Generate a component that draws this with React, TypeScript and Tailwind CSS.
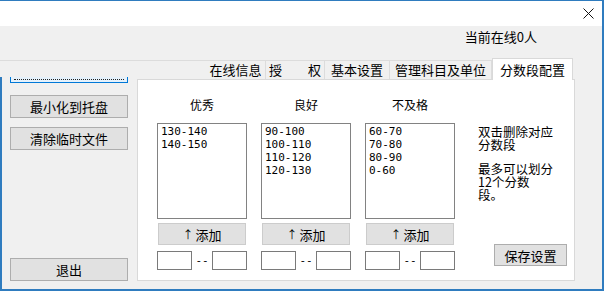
import React from 'react';

const columns = [
  { title: '优秀', items: ['130-140', '140-150'] },
  { title: '良好', items: ['90-100', '100-110', '110-120', '120-130'] },
  { title: '不及格', items: ['60-70', '70-80', '80-90', '0-60'] },
];

const tabs = [
  { label: '在线信息', w: 'w-[60px]' },
  { label: '授　　权', w: 'w-[59px]' },
  { label: '基本设置', w: 'w-[65px]' },
  { label: '管理科目及单位', w: 'w-[102px]' },
];

function Btn({ children, className }: { children: React.ReactNode; className?: string }) {
  return (
    <button
      className={cn(
        'flex items-center justify-center bg-[#e1e1e1] border border-[#adadad] text-[13px] leading-none text-black',
        className
      )}
    >
      {children}
    </button>
  );
}

export default function App() {
  return (
    <div className="w-[605px] h-[291px] bg-white font-['Noto_Sans_CJK_SC',sans-serif] text-black">
      <div className="w-[604px] h-[291px] flex flex-col border-t border-r-2 border-b-2 border-[#2f7cbf] bg-[#f0f0f0]">
        {/* title bar */}
        <div className="h-[25px] bg-white flex items-center justify-end pr-[8px]">
          <svg width="11" height="11" viewBox="0 0 11 11">
            <path d="M0.5 0.5 L10.5 10.5 M10.5 0.5 L0.5 10.5" stroke="#111" strokeWidth="1" />
          </svg>
        </div>

        {/* status */}
        <div className="h-[34px] flex justify-end items-start pt-[3px] pr-[65px]">
          <span className="text-[13px] leading-[16px]">当前在线0人</span>
        </div>

        <div className="flex-1 flex">
          {/* left column */}
          <div className="w-[137px] flex flex-col border-t border-[#dcdcdc]">
            <div className="h-[16px]" />
            <div className="flex-1 flex flex-col border-l-2 border-[#2f7cbf] pl-[8px]">
              <div className="w-[118px] h-[6px] border-x border-b border-[#0078d7] bg-[#e5f1fb] px-[3px]">
                <div className="h-[3px] border-b border-dotted border-[#222]" />
              </div>
              <Btn className="w-[118px] h-[23px] mt-[12px]">最小化到托盘</Btn>
              <Btn className="w-[118px] h-[23px] mt-[9px]">清除临时文件</Btn>
              <Btn className="w-[118px] h-[23px] mt-auto mb-[8px]">退出</Btn>
            </div>
          </div>

          {/* tab control */}
          <div className="flex-1 flex flex-col">
            <div className="h-[19px] flex items-end">
              <div className="w-[69px] h-[19px] border-t border-[#dcdcdc]" />
              {tabs.map((t) => (
                <div
                  key={t.label}
                  className={cn(
                    t.w,
                    'h-[19px] border-t border-r border-[#dcdcdc] flex items-center justify-center text-[13px] whitespace-pre'
                  )}
                >
                  {t.label}
                </div>
              ))}
              <div className="relative top-[1px] w-[81px] h-[22px] bg-white border-x border-t border-[#d9d9d9] flex items-center justify-center text-[13px]">
                分数段配置
              </div>
            </div>

            <div className="w-[438px] h-[202px] bg-white border border-[#d9d9d9] flex pl-[19px] pt-[17px]">
              <div className="flex gap-[14px]">
                {columns.map((c) => (
                  <div key={c.title} className="w-[90px] flex flex-col items-center">
                    <div className="h-[16px] leading-[16px] text-[12px]">{c.title}</div>
                    <div className="mt-[10px] w-[90px] h-[96px] border border-[#828282] bg-white pl-[3px] pt-[1px] font-['DejaVu_Sans_Mono',monospace] text-[11px] leading-[13px]">
                      {c.items.map((it) => (
                        <div key={it}>{it}</div>
                      ))}
                    </div>
                    <button className="mt-[4px] w-[88px] h-[22px] bg-[#e1e1e1] border border-[#cccccc] flex items-center justify-center text-[13px] leading-none">
                      <span className="text-[11px] mr-[2px]">↑</span>添加
                    </button>
                    <div className="mt-[6px] w-full h-[19px] flex items-center justify-between">
                      <div className="w-[35px] h-[19px] border border-[#7a7a7a] bg-white" />
                      <span className="font-['DejaVu_Sans_Mono',monospace] text-[11px] leading-none">--</span>
                      <div className="w-[35px] h-[19px] border border-[#7a7a7a] bg-white" />
                    </div>
                  </div>
                ))}
              </div>

              <div className="ml-[23px] flex-1 flex flex-col">
                <div className="mt-[28px] text-[12.5px] leading-[13px]">
                  <div>双击删除对应</div>
                  <div>分数段</div>
                  <div className="h-[11px]" />
                  <div>最多可以划分</div>
                  <div>12个分数</div>
                  <div>段。</div>
                </div>
                <Btn className="w-[73px] h-[22px] self-end mt-auto mb-[14px] mr-[7px]">保存设置</Btn>
              </div>
            </div>
          </div>
        </div>
      </div>
    </div>
  );
}

function cn(...inputs: any[]) {
  return inputs.filter(Boolean).join(' ');
}
